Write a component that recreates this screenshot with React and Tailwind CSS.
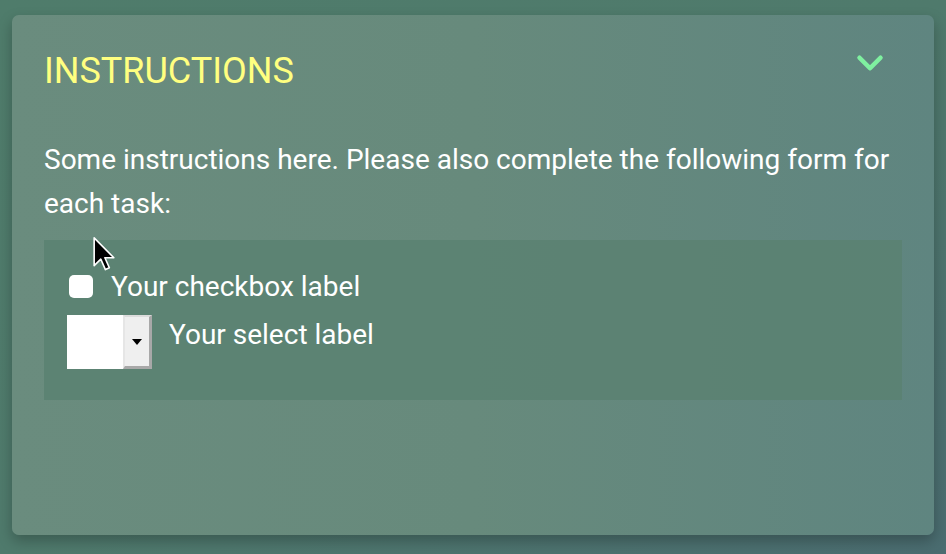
import { ChevronDown } from "lucide-react";

function Cursor() {
  return (
    <svg
      className="absolute left-[93px] top-[237px] pointer-events-none"
      width="22"
      height="34"
      viewBox="0 0 12 19"
    >
      <path
        d="M0.5 0.5 L0.5 16 L4.2 12.4 L6.8 18.2 L9 17.2 L6.5 11.6 L11.5 11.6 Z"
        fill="#000"
        stroke="#fff"
        strokeWidth="0.9"
        strokeLinejoin="round"
      />
    </svg>
  );
}

export default function App() {
  return (
    <div
      className="relative w-[946px] h-[554px] overflow-hidden bg-gradient-to-br from-[#4f7c6b] via-[#4f7a6c] to-[#4a6c70] pt-[15px] px-[12px]"
      style={{ fontFamily: "Roboto, 'Liberation Sans', sans-serif" }}
    >
      <div className="h-[520px] w-[922px] rounded-[7px] bg-gradient-to-r from-[#6a8c7e] via-[#678a7c] to-[#5f8580] shadow-[0_6px_14px_rgba(0,0,0,0.25)] px-8 pt-[35px]">
        <div className="flex items-start justify-between">
          <h1 className="text-[36px] leading-[42px] text-[#ffff80]">
            INSTRUCTIONS
          </h1>
          <ChevronDown
            className="mr-[11px] mt-[-8px] text-[#7ff0a0]"
            size={42}
            strokeWidth={2.6}
          />
        </div>

        <p className="mt-[46px] text-[28px] leading-[44px] text-white">
          Some instructions here. Please also complete the following form for
          each task:
        </p>

        <div className="mt-[14px] h-[160px] bg-[#5b8272]/90 pl-[25px] pt-[35px]">
          <label className="flex h-[23px] items-center gap-[18px] text-[28px] text-white">
            <span className="block h-[23px] w-[24px] shrink-0 rounded-[5px] bg-white" />
            Your checkbox label
          </label>

          <div className="mt-[17px] flex items-start gap-[17px] text-[28px] text-white">
            <div className="flex h-[54px] w-[85px] -ml-[2px] bg-white">
              <div className="flex-1" />
              <div className="flex w-[29px] items-center justify-center border-t-[2px] border-l-[2px] border-r-[3px] border-b-[3px] border-t-[#dcdcdc] border-l-[#e6e6e6] border-r-[#a8a8a8] border-b-[#a8a8a8] bg-[#efefef]">
                <svg width="10" height="6" viewBox="0 0 10 6">
                  <path d="M0 0 L10 0 L5 6 Z" fill="#000" />
                </svg>
              </div>
            </div>
            <span className="mt-[3px] leading-[33px]">Your select label</span>
          </div>
        </div>
      </div>
      <Cursor />
    </div>
  );
}
